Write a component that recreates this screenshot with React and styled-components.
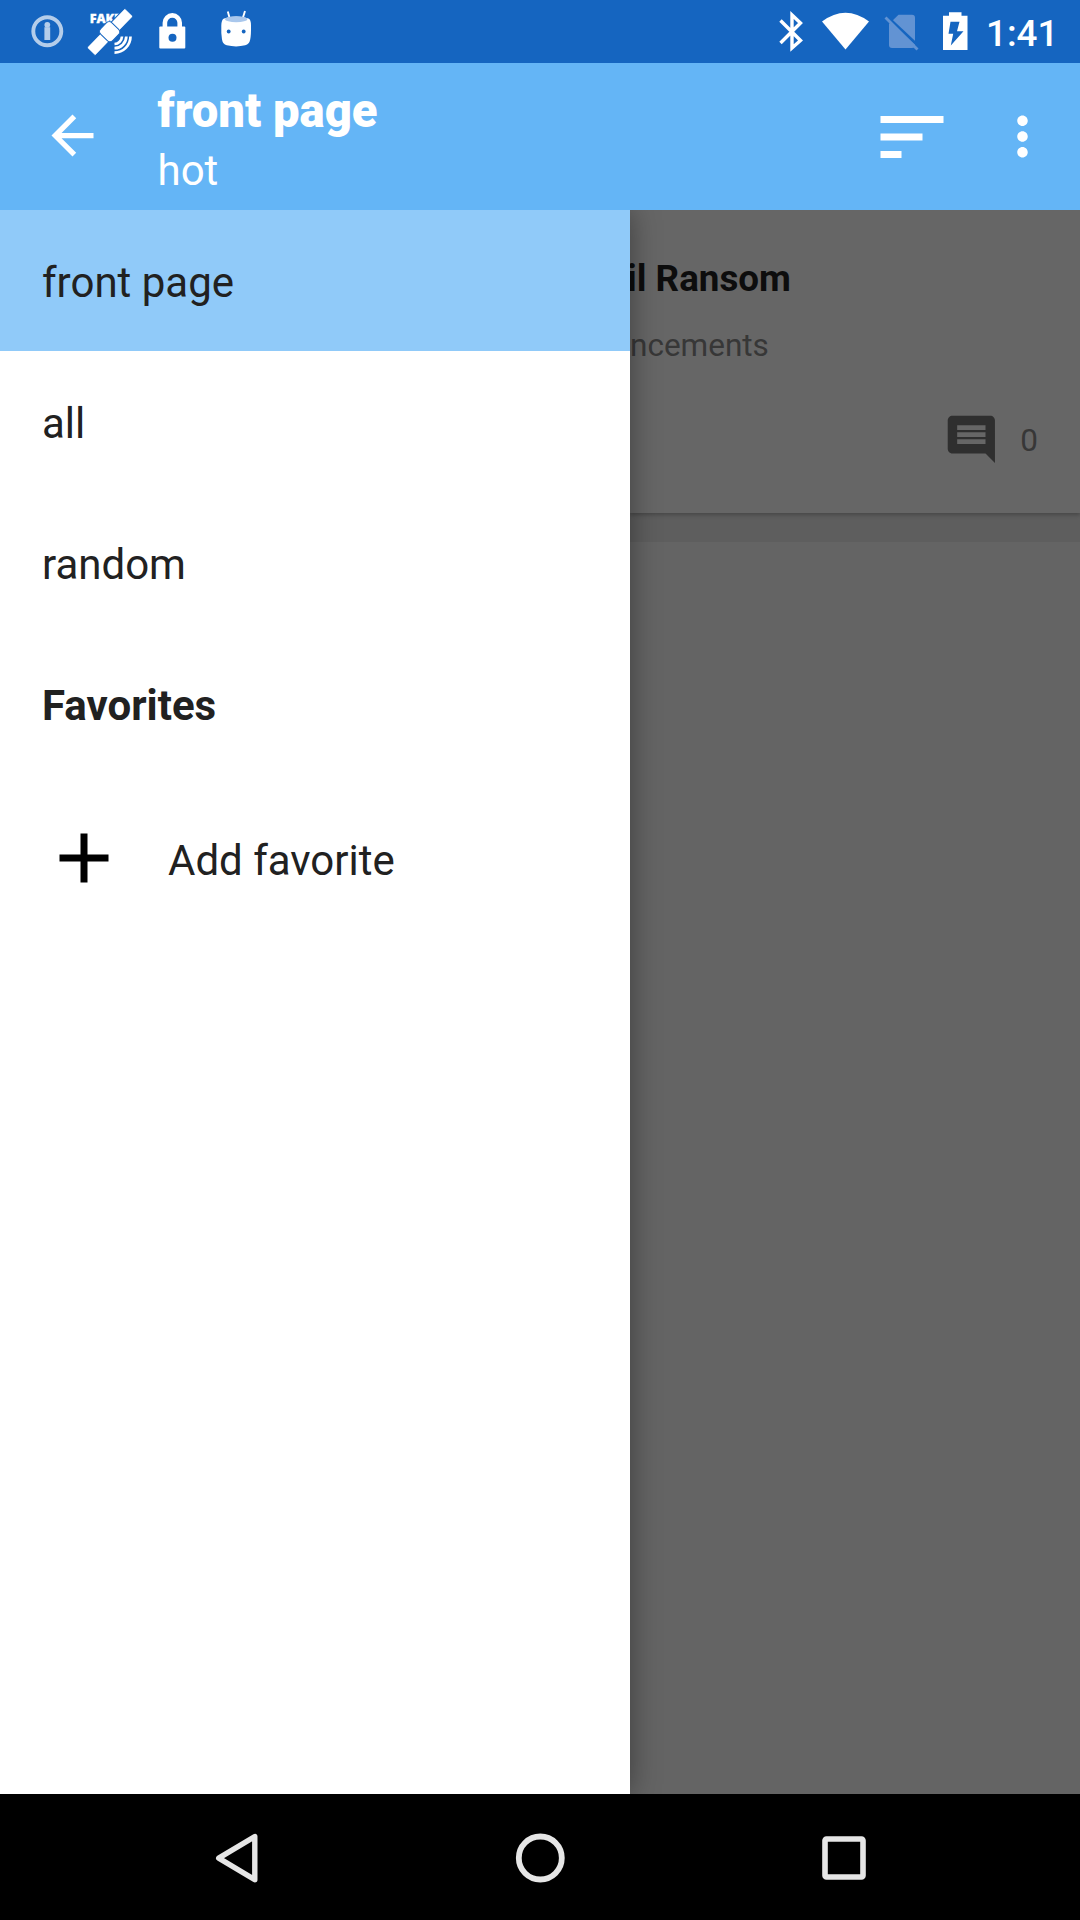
import React from "react";
import styled, { createGlobalStyle } from "styled-components";

const GlobalStyle = createGlobalStyle`
  *, *::before, *::after { box-sizing: border-box; }
  body {
    margin: 0;
    font-family: Roboto, "Noto Sans", sans-serif;
    background: #000;
  }
  svg { display: block; flex: none; }
`;

const Screen = styled.div`
  width: 1080px;
  height: 1920px;
  display: flex;
  flex-direction: column;
  overflow: hidden;
`;

const StatusBar = styled.div`
  height: 63px;
  flex: none;
  display: flex;
  justify-content: space-between;
  padding: 0 25px 0 16px;
  background: #1565c0;
  color: #fff;
`;

const StatusGroup = styled.div`
  display: flex;
`;

const Clock = styled.div`
  width: 75px;
  padding-left: 6px;
  font-size: 36.75px;
  font-weight: 500;
  line-height: 67px;
  white-space: nowrap;
`;

const AppBar = styled.header`
  height: 147px;
  flex: none;
  display: flex;
  align-items: center;
  padding: 0 26px 0 40.5px;
  background: #64b5f6;
  color: #fff;
`;

const BackButton = styled.div`
  padding-bottom: 2px;
`;

const TitleBlock = styled.div`
  flex: 1;
  padding: 8px 0 0 54px;
`;

const Title = styled.div`
  font-size: 47.25px;
  font-weight: 900;
  line-height: 60px;
`;

const Subtitle = styled.div`
  font-size: 42px;
  line-height: 60px;
`;

const Actions = styled.div`
  display: flex;
  align-items: center;
  gap: 37px;
`;

const Body = styled.div`
  flex: 1;
  display: flex;
  min-height: 0;
`;

const Drawer = styled.nav`
  width: 630px;
  flex: none;
  background: #fff;
  color: #212121;
  box-shadow: 0 0 28px rgba(0, 0, 0, 0.4);
  clip-path: inset(0 -40px 0 0);
  z-index: 1;
`;

const DrawerRow = styled.div`
  height: ${(p) => (p.$tall ? 168 : 141)}px;
  display: flex;
  align-items: center;
  gap: 42px;
  padding: 0 42px;
  font-size: 42px;
  font-weight: ${(p) => (p.$heading ? 700 : 400)};
  background: ${(p) => (p.$selected ? "#90caf9" : "transparent")};
`;

const RowLabel = styled.span`
  padding-top: 4px;
`;

const Content = styled.main`
  flex: 1;
  min-width: 0;
  overflow: hidden;
  background: #646464;
`;

const PostList = styled.div`
  height: 332px;
  background: #5e5e5e;
`;

const Card = styled.article`
  height: 303px;
  display: flex;
  flex-direction: column;
  padding-top: 45px;
  background: #666;
  box-shadow: 0 2px 4px rgba(0, 0, 0, 0.25);
  white-space: nowrap;
`;

const PostTitle = styled.div`
  margin-left: -3px;
  font-size: 36.75px;
  font-weight: 700;
  line-height: 48px;
  color: #0d0d0d;
`;

const PostSource = styled.div`
  margin-top: 23px;
  font-size: 31.5px;
  line-height: 40px;
  color: #373737;
`;

const PostFooter = styled.div`
  display: flex;
  justify-content: flex-end;
  align-items: center;
  gap: 21px;
  margin-top: 43px;
  padding-right: 42px;
  font-size: 31.5px;
  line-height: 57px;
  color: #373737;
`;

const CommentCount = styled.span`
  padding-top: 3px;
`;

const NavBar = styled.div`
  height: 126px;
  flex: none;
  display: flex;
  justify-content: center;
  align-items: center;
  padding-top: 1px;
  background: #000;
`;

const NavButton = styled.div`
  width: 303px;
  display: flex;
  justify-content: center;
`;

const InfoIcon = () => (
  <svg width="63" height="63" viewBox="16 0 63 63" opacity="0.68">
    <circle cx="47.3" cy="31.2" r="14" fill="none" stroke="#fff" strokeWidth="3.9" />
    <path d="M47.3 27.200v12.800" stroke="#fff" strokeWidth="5.8" />
    <circle cx="47.300" cy="24.800" r="2.900" fill="#fff" />
  </svg>
);

const SatelliteIcon = () => (
  <svg width="63" height="63" viewBox="79 0 63 63" fill="#fff">
    <text x="89.8" y="22.6" fontFamily="Open Sans, sans-serif" fontSize="12.6" fontWeight="800" textLength="31" stroke="#fff" strokeWidth="0.3">FAKE</text>
    <g transform="translate(110 32) rotate(-46)" stroke="#1565c0" strokeWidth="1">
      <rect x="-27.500" y="-6" width="55" height="12" rx="1.500" />
      <rect x="-8" y="-9" width="16" height="17" rx="4" />
    </g>
    <g fill="none" stroke="#fff" strokeWidth="2.7">
      <path d="M114.500 44a8 8 0 0 0 7.500-7.500" />
      <path d="M114.500 48.200a12 12 0 0 0 11.800-11.800" />
      <path d="M114.500 52.600a16 16 0 0 0 16-16" />
    </g>
  </svg>
);

const LockIcon = () => (
  <svg width="63" height="63" viewBox="142 0 63 63">
    <path d="M164.900 28v-5.200a7.400 7.400 0 0 1 14.800 0V28" fill="none" stroke="#fff" strokeWidth="4.600" />
    <rect x="159.300" y="26.600" width="26" height="22" rx="1" fill="#fff" />
    <circle cx="172.500" cy="37.800" r="4" fill="#1565c0" />
  </svg>
);

const RobotIcon = () => (
  <svg width="63" height="63" viewBox="205 0 63 63">
    <path d="M229.600 18l-1.800-6.500M242.800 18l2.200-7" stroke="#fff" strokeWidth="1.900" />
    <path d="M224 18.500q12-4 24.500 0 2.500 1 2.500 7 .2 9-.8 14-.8 4.500-5 5.800-9 2.200-18.500 0-4-1.300-4.700-5.800-1-7-.7-14 .2-6 2.700-7z" fill="#fff" />
    <ellipse cx="236.200" cy="19.200" rx="11.200" ry="3" fill="#a9c7ec" />
    <circle cx="228.700" cy="31.500" r="1.900" fill="#1565c0" />
    <circle cx="243.700" cy="31.500" r="1.900" fill="#1565c0" />
  </svg>
);

const BluetoothIcon = () => (
  <svg width="50" height="63" viewBox="767 0 50 63">
    <path d="M780.500 20.500L800.500 40.500 792 48V15l8.500 8L780.500 43" fill="none" stroke="#fff" strokeWidth="3.400" />
  </svg>
);

const WifiIcon = () => (
  <svg width="57" height="63" viewBox="817 0 57 63">
    <path d="M822 21.500Q845.500 4 869 21.500L845.500 49.500z" fill="#fff" />
  </svg>
);

const NoSimIcon = () => (
  <svg width="56" height="63" viewBox="874 0 56 63">
    <path d="M898.500 14.700h13.500a3 3 0 0 1 3 3V45a3 3 0 0 1-3 3h-20a3 3 0 0 1-3-3V24z" fill="#6293d3" />
    <path d="M887 16.500L919.500 47" stroke="#1565c0" strokeWidth="3" />
    <path d="M885.500 17.500L917.500 49.500" stroke="#6293d3" strokeWidth="2.800" />
  </svg>
);

const BatteryIcon = () => (
  <svg width="50" height="63" viewBox="930 0 50 63">
    <path d="M949 12.300h12.500v3.500h6v34.200h-24.500V15.800h6z" fill="#fff" />
    <path d="M950.500 21.800h9l-2.500 9.400h6.500L950.800 45.500l2.400-11.800h-4.700z" fill="#1565c0" />
  </svg>
);

const MaterialIcon = ({ size, color = "#fff", d }) => (
  <svg width={size} height={size} viewBox="0 0 24 24" fill={color}>
    <path d={d} />
  </svg>
);

const ARROW_BACK = "M20 11H7.830l5.590-5.590L12 4l-8 8 8 8 1.410-1.410L7.830 13H20v-2z";
const SORT = "M3 18h6v-2H3v2zM3 6v2h18V6H3zm0 7h12v-2H3v2z";
const MORE =
  "M12 8c1.100 0 2-.9 2-2s-.9-2-2-2-2 .9-2 2 .9 2 2 2zm0 2c-1.100 0-2 .9-2 2s.9 2 2 2 2-.9 2-2-.9-2-2-2zm0 6c-1.100 0-2 .9-2 2s.9 2 2 2 2-.9 2-2-.9-2-2-2z";
const ADD = "M19 13h-6v6h-2v-6H5v-2h6V5h2v6h6v2z";
const COMMENT =
  "M21.990 4c0-1.100-.89-2-1.990-2H4c-1.100 0-2 .9-2 2v12c0 1.100.9 2 2 2h14l4 4-.01-18zM18 14H6v-2h12v2zm0-3H6V9h12v2zm0-3H6V6h12v2z";

const PLACES = ["front page", "all", "random"];

export default function App() {
  return (
    <Screen>
      <GlobalStyle />
      <StatusBar>
        <StatusGroup>
          <InfoIcon />
          <SatelliteIcon />
          <LockIcon />
          <RobotIcon />
        </StatusGroup>
        <StatusGroup>
          <BluetoothIcon />
          <WifiIcon />
          <NoSimIcon />
          <BatteryIcon />
          <Clock>1:41</Clock>
        </StatusGroup>
      </StatusBar>

      <AppBar>
        <BackButton>
          <MaterialIcon size={63} d={ARROW_BACK} />
        </BackButton>
        <TitleBlock>
          <Title>front page</Title>
          <Subtitle>hot</Subtitle>
        </TitleBlock>
        <Actions>
          <MaterialIcon size={84} d={SORT} />
          <MaterialIcon size={63} d={MORE} />
        </Actions>
      </AppBar>

      <Body>
        <Drawer>
          {PLACES.map((name, i) => (
            <DrawerRow key={name} $selected={i === 0}>
              <RowLabel>{name}</RowLabel>
            </DrawerRow>
          ))}
          <DrawerRow $heading>
            <RowLabel>Favorites</RowLabel>
          </DrawerRow>
          <DrawerRow $tall>
            <MaterialIcon size={84} color="#000" d={ADD} />
            <RowLabel>Add favorite</RowLabel>
          </DrawerRow>
        </Drawer>
        <Content>
          <PostList>
            <Card>
              <PostTitle>il Ransom</PostTitle>
              <PostSource>ncements</PostSource>
              <PostFooter>
                <MaterialIcon size={56.7} color="#2f2f2f" d={COMMENT} />
                <CommentCount>0</CommentCount>
              </PostFooter>
            </Card>
          </PostList>
        </Content>
      </Body>

      <NavBar>
        <NavButton>
          <svg width="50" height="56" viewBox="212 1829.500 50 56">
            <path d="M254.800 1836v43.200L218.700 1857.600z" fill="none" stroke="#e6e6e6" strokeWidth="5.400" strokeLinejoin="round" />
          </svg>
        </NavButton>
        <NavButton>
          <svg width="56" height="56" viewBox="512 1829.500 56 56">
            <circle cx="540.300" cy="1857.500" r="21.500" fill="none" stroke="#e6e6e6" strokeWidth="5.800" />
          </svg>
        </NavButton>
        <NavButton>
          <svg width="56" height="56" viewBox="815 1829.500 56 56">
            <rect x="825" y="1838.500" width="38" height="38" rx="1.500" fill="none" stroke="#e6e6e6" strokeWidth="5.600" />
          </svg>
        </NavButton>
      </NavBar>
    </Screen>
  );
}
